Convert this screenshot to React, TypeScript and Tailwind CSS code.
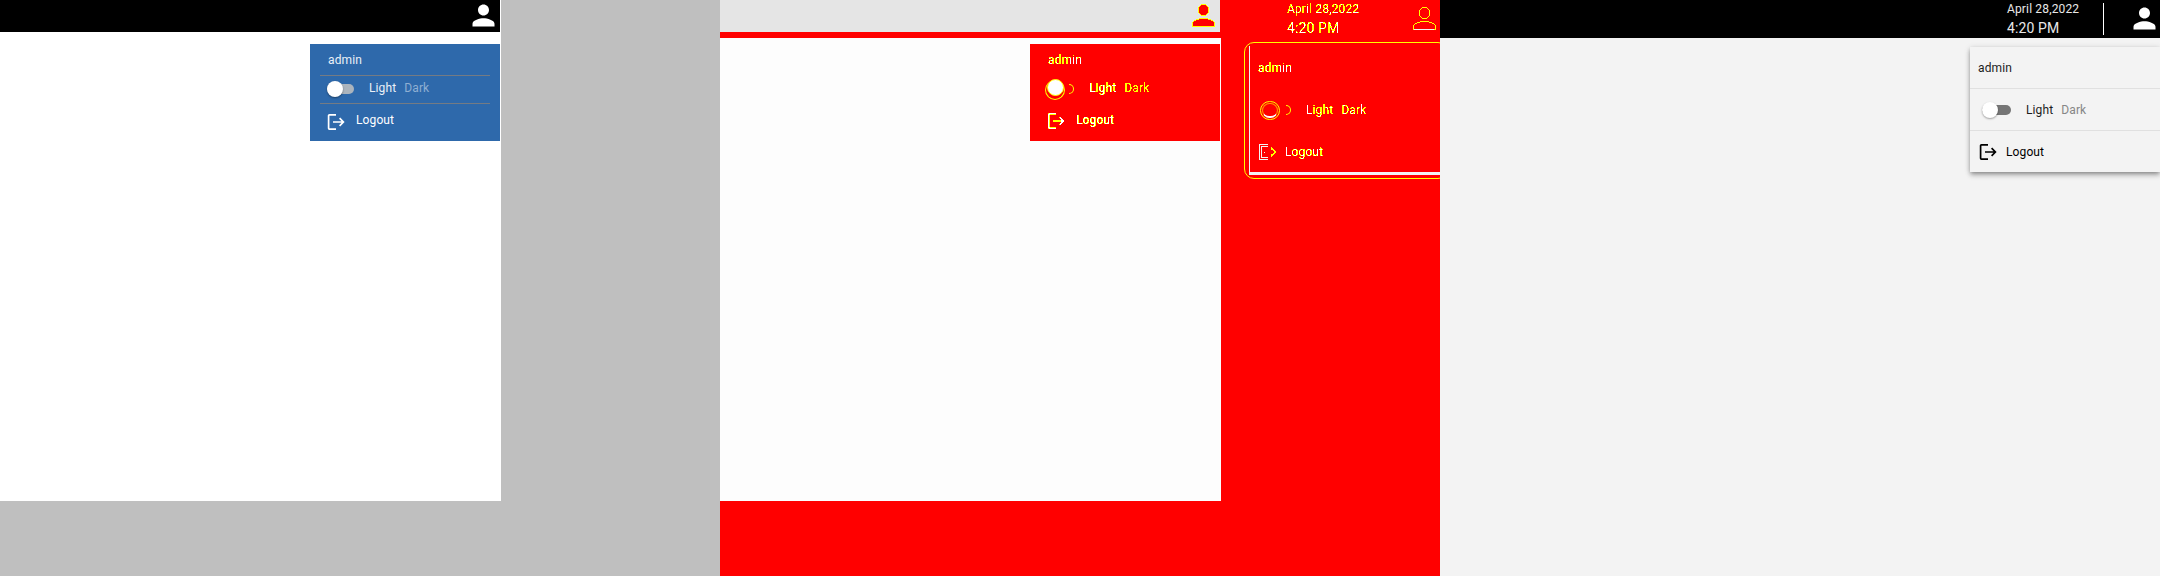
import type { ReactNode } from "react";

const font = "font-['Roboto',sans-serif]";

function DiffFilter() {
  return (
    <svg width="0" height="0" className="absolute">
      <filter id="edges" colorInterpolationFilters="sRGB" x="-5%" y="-5%" width="110%" height="110%">
        <feColorMatrix type="matrix" values="0 0 0 0 1  0 0 0 0 1  0 0 0 1 0  0 0 0 1 0" result="a" />
        <feComponentTransfer in="a">
          <feFuncB type="discrete" tableValues="0 0 0 0 0 1" />
          <feFuncA type="discrete" tableValues="0 0 1 1 1 1" />
        </feComponentTransfer>
      </filter>
    </svg>
  );
}

function Person({ className = "", outline = false }: { className?: string; outline?: boolean }) {
  return (
    <svg viewBox="0 0 24 24" className={`h-[33px] w-[33px] shrink-0 ${className}`} shapeRendering={outline ? "crispEdges" : undefined}>
      <path
        d="M12 12c2.21 0 4-1.79 4-4s-1.79-4-4-4-4 1.79-4 4 1.79 4 4 4zm0 2c-2.67 0-8 1.34-8 4v2h16v-2c0-2.66-5.33-4-8-4z"
        fill={outline ? "#ff0000" : "currentColor"}
        stroke={outline ? "#ffff00" : "none"}
        strokeWidth={outline ? 0.73 : 0}
      />
    </svg>
  );
}

function LogoutIcon() {
  return (
    <svg viewBox="0 0 18 16" className="h-4 w-[18px] shrink-0" fill="none" stroke="currentColor" strokeWidth="1.7">
      <path d="M9 .9H2.4Q1.6 .9 1.6 1.7V14.3Q1.6 15.1 2.4 15.1H9M6 8H16.4M12.6 4.2L16.4 8L12.6 11.8" />
    </svg>
  );
}

function Toggle({ knob, track }: { knob: string; track: string }) {
  return (
    <div className={`flex h-[10px] w-[27px] items-center rounded-full ${track}`}>
      <div className={`h-4 w-4 shrink-0 rounded-full ${knob}`} />
    </div>
  );
}

function Pane({ children, className }: { children: ReactNode; className: string }) {
  return <section className={`relative h-[576px] w-[720px] shrink-0 overflow-hidden ${className}`}>{children}</section>;
}

function BlueMenu() {
  return (
    <div className="absolute left-[310px] top-[44px] h-[97px] w-[190px] bg-[#2e69ab] px-[10px] text-xs tracking-[0.12px] text-[#eaf0f7]">
      <div className="flex h-[32px] items-center border-b border-[#747b84] pl-2">admin</div>
      <div className="flex h-[28px] items-center border-b border-[#747b84] pb-[3px] pl-[7px]">
        <div className="pt-[2px]">
          <Toggle knob="bg-white shadow-[0_1px_2px_rgba(0,0,0,0.4)]" track="bg-[#abb4bd]" />
        </div>
        <span className="ml-[15px]">Light</span>
        <span className="ml-2 text-[#8fafd2]">Dark</span>
      </div>
      <div className="flex h-[34px] items-center pl-[7px] pt-px text-white">
        <LogoutIcon />
        <span className="-mt-[3px] ml-[11px]">Logout</span>
      </div>
    </div>
  );
}

function CompactDiff() {
  return (
    <div className="absolute left-0 top-0 h-[501px] w-[501px]">
      <header className="flex h-8 w-[500px] justify-end bg-[#e5e5e5]">
        <Person outline className="-mt-px" />
      </header>
      <div className="mt-[6px] h-[463px] bg-[#fdfdfd]" />
      <div className="absolute left-[310px] top-[44px] h-[97px] w-[190px] bg-[#ff0000] px-[10px] text-xs tracking-[0.12px] text-white">
        <div className="flex h-[31px] items-center pl-2 [filter:url(#edges)]">admin</div>
        <div className="flex h-[29px] items-center pb-[3px] pl-[5px]">
          <div className="relative mt-[4px] flex h-5 w-5 shrink-0 justify-center rounded-full border border-t-0 border-[#ffff00]">
            <div className="-mt-px h-[17px] w-[17px] shrink-0 rounded-full border border-[#ffff00] bg-white" />
          </div>
          <div className="ml-1 mt-[2px] h-[10px] w-[5px] rounded-r-full border border-l-0 border-[#ffff00]" />
          <span className="ml-[15px] [-webkit-text-stroke:0.2px_white] [filter:url(#edges)]">Light</span>
          <span className="ml-2 text-white/80 [filter:url(#edges)]">Dark</span>
        </div>
        <div className="flex h-[34px] items-center pl-[7px] [filter:url(#edges)]">
          <LogoutIcon />
          <span className="-mt-[2px] ml-[11px] [-webkit-text-stroke:0.3px_white]">Logout</span>
        </div>
      </div>
    </div>
  );
}

function WideDiff() {
  return (
    <>
      <div className="absolute left-[567px] top-0 text-white/90 [filter:url(#edges)]">
        <div className="h-[19px] text-xs leading-[18px] tracking-[0.15px]">April 28,2022</div>
        <div className="text-sm leading-[18px] tracking-[0.1px]">4:20 PM</div>
      </div>
      <Person outline className="absolute left-[688px] top-[2px]" />
      <div className="absolute left-[694px] top-[29px] h-px w-5 bg-[#f3f3f3]" />
      <div className="absolute left-[524px] top-[42px] h-[137px] w-[204px] rounded-[10px] border border-[#ffff00] pl-1 pt-[3px] text-xs tracking-[0.12px]">
        <div className="h-[129px] border-b-[3px] border-l border-[#f3f3f3] pl-2 text-white">
          <div className="flex h-[43px] items-center pt-px [filter:url(#edges)]">admin</div>
          <div className="flex h-[42px] items-center pl-[2px]">
            <div className="h-[19px] w-5 rounded-full border border-[#ffff00] p-px">
              <div className="h-[15px] w-4 rounded-full border border-b-2 border-[#ffff00]/60 border-b-white" />
            </div>
            <div className="ml-[6px] h-[10px] w-[5px] rounded-r-full border border-l-0 border-[#ffff00]" />
            <span className="ml-[15px] text-white/90 [filter:url(#edges)]">Light</span>
            <span className="ml-2 text-white/90 [filter:url(#edges)]">Dark</span>
          </div>
          <div className="flex h-[42px] items-center">
            <svg viewBox="0 0 18 16" className="h-4 w-[18px]" fill="none" shapeRendering="crispEdges">
              <path d="M9.5 .5H1.5V15.5H9.5M9.5 2.5H3.5V13.5H9.5M6 8.5H7" stroke="#f3f3f3" />
              <path d="M13 3.5L17.5 8L13 12.5M13 3.5V6M13 10V12.5" stroke="#ffff00" />
            </svg>
            <span className="ml-[9px] [filter:url(#edges)]">Logout</span>
          </div>
        </div>
      </div>
    </>
  );
}

function LightMenu() {
  return (
    <div className="absolute left-[530px] top-[47px] h-[125px] w-[190px] bg-[#f3f3f3] text-xs tracking-[0.12px] text-[#1c1c1c] shadow-[0_2px_4px_-1px_rgba(0,0,0,0.3),0_4px_5px_0_rgba(0,0,0,0.14),0_1px_6px_0_rgba(0,0,0,0.16)]">
      <div className="flex h-[42px] items-center border-b border-[#e0e0e0] pl-2">admin</div>
      <div className="flex h-[42px] items-center border-b border-[#e0e0e0] pl-3">
        <div className="flex h-[10px] w-[29px] items-center rounded-full bg-[#757575]">
          <div className="h-4 w-4 shrink-0 rounded-full bg-white shadow-[0_1px_2px_rgba(0,0,0,0.35)]" />
        </div>
        <span className="ml-[15px]">Light</span>
        <span className="ml-2 text-[#868686]">Dark</span>
      </div>
      <div className="flex h-[42px] items-center pl-[9px] text-black">
        <LogoutIcon />
        <span className="ml-[9px]">Logout</span>
      </div>
    </div>
  );
}

export default function App() {
  return (
    <main className={`flex h-[576px] w-[2160px] overflow-hidden ${font}`}>
      <DiffFilter />
      <Pane className="bg-[#bfbfbf]">
        <div className="h-[501px] w-[501px] bg-white">
          <header className="flex h-8 w-[500px] justify-end bg-black text-white">
            <Person className="-mt-px" />
          </header>
        </div>
        <BlueMenu />
      </Pane>
      <Pane className="bg-[#ff0000]">
        <CompactDiff />
        <WideDiff />
      </Pane>
      <Pane className="bg-[#f3f3f3]">
        <header className="flex h-[38px] justify-end bg-black text-[#e8e8e8]">
          <div className="w-[96px]">
            <div className="h-[19px] text-xs leading-[18px] tracking-[0.15px]">April 28,2022</div>
            <div className="text-sm leading-[18px] tracking-[0.1px]">4:20 PM</div>
          </div>
          <div className="mr-6 mt-[3px] h-8 w-px bg-white" />
          <Person className="-mr-px mt-[2px] text-white" />
        </header>
        <LightMenu />
      </Pane>
    </main>
  );
}
